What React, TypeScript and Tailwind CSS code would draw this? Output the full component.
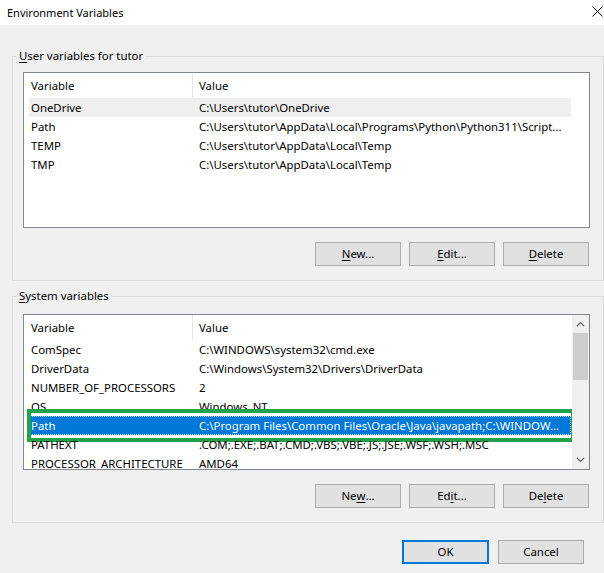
import React from 'react';

type Row = [string, string];

const userVars: Row[] = [
    ["OneDrive", "C:\\Users\\tutor\\OneDrive"],
    ["Path", "C:\\Users\\tutor\\AppData\\Local\\Programs\\Python\\Python311\\Script..."],
    ["TEMP", "C:\\Users\\tutor\\AppData\\Local\\Temp"],
    ["TMP", "C:\\Users\\tutor\\AppData\\Local\\Temp"],
];

const systemVars: Row[] = [
    ["ComSpec", "C:\\WINDOWS\\system32\\cmd.exe"],
    ["DriverData", "C:\\Windows\\System32\\Drivers\\DriverData"],
    ["NUMBER_OF_PROCESSORS", "2"],
    ["OS", "Windows_NT"],
    ["Path", "C:\\Program Files\\Common Files\\Oracle\\Java\\javapath;C:\\WINDOW..."],
    ["PATHEXT", ".COM;.EXE;.BAT;.CMD;.VBS;.VBE;.JS;.JSE;.WSF;.WSH;.MSC"],
    ["PROCESSOR_ARCHITECTURE", "AMD64"],
];

function Key({ children }: { children: React.ReactNode }) {
    return <span className="underline underline-offset-2">{children}</span>;
}

function Button({ children, primary }: { children: React.ReactNode; primary?: boolean }) {
    return (
        <div
            className={
                "h-[24px] flex items-center justify-center bg-[#e1e1e1] " +
                (primary ? "w-[87px] border-2 border-[#0078d7]" : "w-[86px] border border-[#adadad]")
            }
        >
            {children}
        </div>
    );
}

function ScrollBar() {
    return (
        <div className="w-[17px] h-full bg-[#f0f0f0] flex flex-col shrink-0">
            <div className="h-[18px] flex items-center justify-center">
                <svg width="9" height="6" viewBox="0 0 9 6">
                    <path d="M1 5 L4.5 1.5 L8 5" fill="none" stroke="#606060" strokeWidth="1.2" />
                </svg>
            </div>
            <div className="mx-[1px] h-[47px] bg-[#cdcdcd]" />
            <div className="flex-1" />
            <div className="h-[18px] flex items-center justify-center">
                <svg width="9" height="6" viewBox="0 0 9 6">
                    <path d="M1 1 L4.5 4.5 L8 1" fill="none" stroke="#606060" strokeWidth="1.2" />
                </svg>
            </div>
        </div>
    );
}

function ListView({
    rows,
    hover,
    selected,
    scroll,
}: {
    rows: Row[];
    hover?: number;
    selected?: number;
    scroll?: boolean;
}) {
    return (
        <div className="w-[567px] h-[156px] border border-[#828790] bg-white flex overflow-hidden">
            <div className="flex-1 flex flex-col overflow-hidden">
                <div className="h-[25px] flex shrink-0">
                    <div className="w-[168px] shrink-0 pl-[7px] flex items-center">Variable</div>
                    <div className="w-px shrink-0 bg-[#e5e5e5]" />
                    <div className="pl-[6px] flex items-center">Value</div>
                </div>
                {rows.map((r, i) => {
                    const isSel = i === selected;
                    const isHover = i === hover;
                    return (
                        <div
                            key={i}
                            className={
                                "relative ml-[5px] w-[542px] h-[19px] flex items-center shrink-0 " +
                                (isSel
                                    ? "bg-[#0078d7] text-white outline-1 outline-dotted outline-[#a9d2f5] -outline-offset-1"
                                    : isHover
                                    ? "bg-[#efefef]"
                                    : "")
                            }
                        >
                            <div className="w-[168px] shrink-0 pl-[2px] whitespace-nowrap overflow-hidden">{r[0]}</div>
                            <div className="flex-1 pl-[2px] whitespace-nowrap overflow-hidden">{r[1]}</div>
                            {isSel && (
                                <div className="absolute -left-[2px] -right-[4px] -top-[7px] -bottom-[7px] border-4 border-[#20a34a]" />
                            )}
                        </div>
                    );
                })}
            </div>
            {scroll && <ScrollBar />}
        </div>
    );
}

function GroupBox({
    label,
    children,
}: {
    label: React.ReactNode;
    children: React.ReactNode;
}) {
    return (
        <div className="relative ml-[12px] w-[592px] border border-[#dcdcdc] pt-[15px] pl-[10px] pb-[14px]">
            <div className="absolute left-[4px] -top-[9px] px-[2px] bg-[#f0f0f0] leading-[16px]">{label}</div>
            {children}
        </div>
    );
}

export default function App() {
    return (
        <div className="w-[604px] h-[573px] bg-[#f0f0f0] overflow-hidden text-[11.4px] text-black font-['Segoe_UI','Noto_Sans',sans-serif] leading-[16px]">
            <div className="h-[25px] bg-white flex items-center justify-between pl-[7px] pr-[1px]">
                <span className="text-[11px]">Environment Variables</span>
                <svg width="11" height="11" viewBox="0 0 11 11" className="mb-[2px]">
                    <path d="M0.5 0.5 L10.5 10.5 M10.5 0.5 L0.5 10.5" stroke="#000" strokeWidth="1" />
                </svg>
            </div>

            <div className="mt-[31px]">
                <GroupBox label={<><Key>U</Key>ser variables for tutor</>}>
                    <ListView rows={userVars} hover={0} />
                    <div className="mt-[14px] w-[567px] pr-[1px] flex justify-end gap-[8px]">
                        <Button><Key>N</Key>ew...</Button>
                        <Button><Key>E</Key>dit...</Button>
                        <Button><Key>D</Key>elete</Button>
                    </div>
                </GroupBox>
            </div>

            <div className="mt-[15px]">
                <GroupBox label={<><Key>S</Key>ystem variables</>}>
                    <div className="pt-[2px]">
                        <ListView rows={systemVars} selected={4} scroll />
                    </div>
                    <div className="mt-[14px] w-[567px] pr-[1px] flex justify-end gap-[8px]">
                        <Button>Ne<Key>w</Key>...</Button>
                        <Button>Ed<Key>i</Key>t...</Button>
                        <Button>De<Key>l</Key>ete</Button>
                    </div>
                </GroupBox>
            </div>

            <div className="mt-[17px] pr-[20px] flex justify-end gap-[9px]">
                <Button primary>OK</Button>
                <Button>Cancel</Button>
            </div>
        </div>
    );
}
